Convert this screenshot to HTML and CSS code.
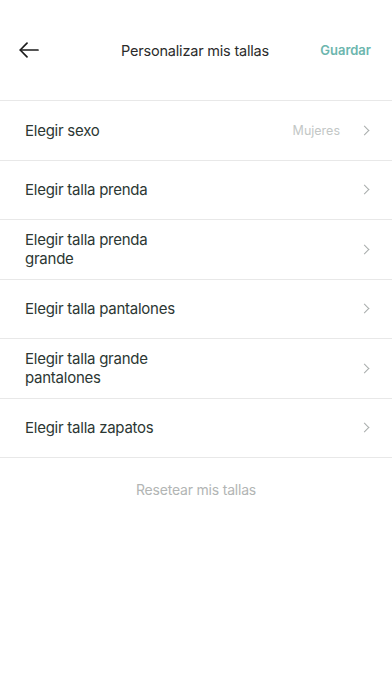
FILE: index.html
```html
<!DOCTYPE html>
<html lang="es">
<head>
    <meta charset="utf-8">
    <meta name="viewport" content="width=device-width, initial-scale=1">
    <title>Personalizar mis tallas</title>
    <link rel="stylesheet" href="styles.css">
</head>
<body>
<div class="screen">
    <div class="topbar">
        <button class="back" aria-label="Volver">
            <svg width="20" height="16" viewBox="0 0 20 16" fill="none" stroke="#1c1c1c" stroke-width="1.7" stroke-linecap="round" stroke-linejoin="round">
                <path d="M19 8H1.5"/>
                <path d="M8 1.2L1.2 8L8 14.8"/>
            </svg>
        </button>
        <div class="title">Personalizar mis tallas</div>
        <button class="save">Guardar</button>
    </div>

    <ul class="list">
        <li class="row">
            <span class="label">Elegir sexo</span>
            <span class="value">Mujeres</span>
            <span class="chev"></span>
        </li>
        <li class="row">
            <span class="label">Elegir talla prenda</span>
            <span class="chev"></span>
        </li>
        <li class="row">
            <span class="label narrow">Elegir talla prenda grande</span>
            <span class="chev"></span>
        </li>
        <li class="row">
            <span class="label">Elegir talla pantalones</span>
            <span class="chev"></span>
        </li>
        <li class="row">
            <span class="label narrow">Elegir talla grande pantalones</span>
            <span class="chev"></span>
        </li>
        <li class="row">
            <span class="label">Elegir talla zapatos</span>
            <span class="chev"></span>
        </li>
    </ul>

    <div class="reset">Resetear mis tallas</div>
</div>
</body>
</html>
```

FILE: styles.css
```css
body {
    margin: 0;
    background: #fff;
    font-family: Inter, 'Noto Sans', sans-serif;
    color: #2c3733;
}
.screen {
    width: 392px;
    min-height: 696px;
}
.topbar {
    height: 100px;
    display: flex;
    align-items: center;
    padding: 0 21px 0 19px;
    box-sizing: border-box;
}
.back {
    border: 0;
    background: none;
    padding: 0;
    width: 60px;
    display: flex;
    align-items: center;
    cursor: pointer;
}
.title {
    flex: 1;
    text-align: center;
    font-size: 14.5px;
    letter-spacing: -0.2px;
    color: #2b2b2b;
}
.save {
    border: 0;
    background: none;
    padding: 0;
    width: 60px;
    text-align: right;
    font-family: inherit;
    font-size: 13px;
    font-weight: 600;
    color: #6cb6ae;
    cursor: pointer;
}
.list {
    list-style: none;
    margin: 0;
    padding: 0;
    border-top: 1px solid #e8e8e8;
}
.row {
    display: flex;
    align-items: center;
    min-height: 58.5px;
    padding: 0 22px 0 25px;
    border-bottom: 1px solid #e8e8e8;
}
.label {
    flex: 1;
    font-size: 15px;
    line-height: 19px;
    letter-spacing: -0.25px;
}
.label.narrow {
    flex: none;
    max-width: 145px;
    margin-right: auto;
}
.value {
    font-size: 12.5px;
    color: #c3c7c6;
    margin-right: 21px;
}
.chev {
    width: 6px;
    height: 6px;
    border-top: 1.2px solid #a9adac;
    border-right: 1.2px solid #a9adac;
    transform: rotate(45deg);
    margin-right: 2px;
}
.reset {
    text-align: center;
    font-size: 14px;
    letter-spacing: -0.2px;
    color: #b2b5b4;
    padding-top: 23px;
}
```
